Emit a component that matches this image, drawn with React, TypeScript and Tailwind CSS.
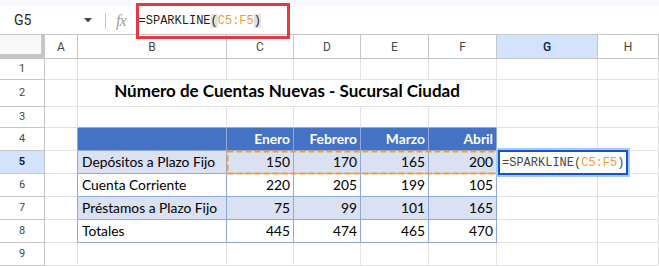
import React from "react";

const COLS = "grid-cols-[45px_33px_149px_67px_67px_68px_68px_101px_61px]";
const ROWS = "grid-rows-[24px_21px_27px_21px_23px_23px_23px_23px_23px_23px]";

const hdrFont = { fontFamily: "Roboto, 'Liberation Sans', Arial, sans-serif" };
const cellFont = { fontFamily: "Lato, 'Open Sans', 'Liberation Sans', sans-serif" };
const monoFont = { fontFamily: "'Liberation Mono', 'DejaVu Sans Mono', monospace" };

type Kind = "plain" | "head" | "band" | "white";

function Cell({
  kind = "plain",
  text,
  right,
  bold,
  rightBlue,
  bottomBlue,
}: {
  kind?: Kind;
  text?: string;
  right?: boolean;
  bold?: boolean;
  rightBlue?: boolean;
  bottomBlue?: boolean;
}) {
  const inTable = kind !== "plain";
  const bg =
    kind === "head" ? "bg-[#4472c4]" : kind === "band" ? "bg-[#d9e1f2]" : "bg-white";
  const rc = inTable || rightBlue ? "border-r-[#8eaadb]" : "border-r-[#e2e2e2]";
  const bc = inTable || bottomBlue ? "border-b-[#8eaadb]" : "border-b-[#e2e2e2]";
  const color = kind === "head" ? "text-white" : "text-black";
  return (
    <div
      className={`border-r border-b ${rc} ${bc} ${bg} ${color} flex items-center overflow-hidden whitespace-nowrap text-[13.8px] ${
        right ? "justify-end pr-[3px]" : "justify-start pl-[4px]"
      } ${bold ? "font-bold" : ""}`}
      style={cellFont}
    >
      {text}
    </div>
  );
}

function RowHdr({ n, active }: { n: number; active?: boolean }) {
  return (
    <div
      className={`border-r border-b border-[#c4c7c5] flex items-center justify-center text-[11px] ${
        active ? "bg-[#d3e3fd] text-[#041e49] font-bold" : "bg-white text-[#444746]"
      }`}
      style={hdrFont}
    >
      {n}
    </div>
  );
}

function ColHdr({ l, active }: { l: string; active?: boolean }) {
  return (
    <div
      className={`border-r border-b border-[#c4c7c5] flex items-center justify-center text-[12px] ${
        active ? "bg-[#d3e3fd] text-[#041e49] font-medium" : "bg-white text-[#444746]"
      }`}
      style={hdrFont}
    >
      {l}
    </div>
  );
}

const data: { label: string; vals: string[]; kind: Kind }[] = [
  { label: "Depósitos a Plazo Fijo", vals: ["150", "170", "165", "200"], kind: "band" },
  { label: "Cuenta Corriente", vals: ["220", "205", "199", "105"], kind: "white" },
  { label: "Préstamos a Plazo Fijo", vals: ["75", "99", "101", "165"], kind: "band" },
  { label: "Totales", vals: ["445", "474", "465", "470"], kind: "white" },
];

export default function App() {
  return (
    <div className="w-[659px] h-[266px] overflow-hidden bg-white relative">
      {/* top band */}
      <div className="h-[7px] bg-[#f8fafd]" />
      {/* formula bar */}
      <div className="h-[28px] flex items-center border-b border-[#c4c7c5] bg-white">
        <div className="w-[105px] flex items-center pl-[14px] pr-[12px] justify-between">
          <span className="text-[14px] text-[#1f1f1f]" style={hdrFont}>
            G5
          </span>
          <svg width="8" height="5" viewBox="0 0 8 5" className="mr-[1px]">
            <path d="M0 0 L8 0 L4 4.5 Z" fill="#444746" />
          </svg>
        </div>
        <div className="w-px h-[16px] bg-[#c4c7c5]" />
        <span
          className="ml-[10px] text-[16px] italic text-[#a0a0a0] tracking-[-1px]"
          style={{ fontFamily: "'Liberation Serif', serif" }}
        >
          fx
        </span>
        <span className="ml-[13px] text-[12px] text-[#1f1f1f]" style={monoFont}>
          =SPARKLINE<span className="bg-[#e3e3e3]">(</span>
          <span className="text-[#f09a3e]">C5:F5</span>
          <span className="bg-[#e3e3e3]">)</span>
        </span>
      </div>

      {/* grid */}
      <div className="relative">
        <div className={`grid ${COLS} ${ROWS}`}>
          {/* header row */}
          <div className="bg-[#f8f9fa] border-r-4 border-b-[5px] border-[#c4c7c5]" />
          {["A", "B", "C", "D", "E", "F", "G", "H"].map((l) => (
            <ColHdr key={l} l={l} active={l === "G"} />
          ))}

          {/* row 1 */}
          <RowHdr n={1} />
          {Array.from({ length: 8 }).map((_, i) => (
            <Cell key={"r1" + i} />
          ))}

          {/* row 2 */}
          <RowHdr n={2} />
          <Cell />
          <div
            className="col-span-5 border-r border-b border-[#e2e2e2] flex items-end justify-center pb-[3px] text-[17px] font-bold text-black whitespace-nowrap"
            style={cellFont}
          >
            Número de Cuentas Nuevas - Sucursal Ciudad
          </div>
          <Cell />
          <Cell />

          {/* row 3 */}
          <RowHdr n={3} />
          <Cell />
          {Array.from({ length: 5 }).map((_, i) => (
            <Cell key={"r3" + i} bottomBlue />
          ))}
          <Cell />
          <Cell />

          {/* row 4 */}
          <RowHdr n={4} />
          <Cell rightBlue />
          <Cell kind="head" />
          {["Enero", "Febrero", "Marzo", "Abril"].map((m) => (
            <Cell key={m} kind="head" text={m} right bold />
          ))}
          <Cell />
          <Cell />

          {data.map((r, ri) => (
            <React.Fragment key={r.label}>
              <RowHdr n={5 + ri} active={ri === 0} />
              <Cell rightBlue />
              <Cell kind={r.kind} text={r.label} />
              {r.vals.map((v, vi) => (
                <Cell key={vi} kind={r.kind} text={v} right />
              ))}
              <Cell />
              <Cell />
            </React.Fragment>
          ))}

          {/* row 9 */}
          <RowHdr n={9} />
          {Array.from({ length: 8 }).map((_, i) => (
            <Cell key={"r9" + i} />
          ))}
        </div>

        {/* copy-range marching ants around C5:F5 */}
        <svg
          className="absolute left-[226px] top-[115px]"
          width="274"
          height="25"
          viewBox="0 0 274 25"
        >
          <rect
            x="1.5"
            y="1.5"
            width="271"
            height="22"
            fill="none"
            stroke="#f29b30"
            strokeWidth="2"
            strokeDasharray="6 3"
          />
        </svg>

        {/* cell editor on G5 */}
        <div className="absolute left-[498px] top-[115px] w-[130px] h-[25px] border-2 border-[#0b57d0] bg-white shadow-[0_0_0_2px_#a8c7fa] flex items-center pl-[2px]">
          <span className="text-[12px] text-[#444746]" style={monoFont}>
            =SPARKLINE(<span className="text-[#f09a3e]">C5:F5</span>)
          </span>
        </div>
      </div>

      {/* red highlight box */}
      <div className="absolute z-10 left-[136px] top-[3px] w-[154px] h-[36px] border-[3px] border-[#e5393f]" />
    </div>
  );
}
